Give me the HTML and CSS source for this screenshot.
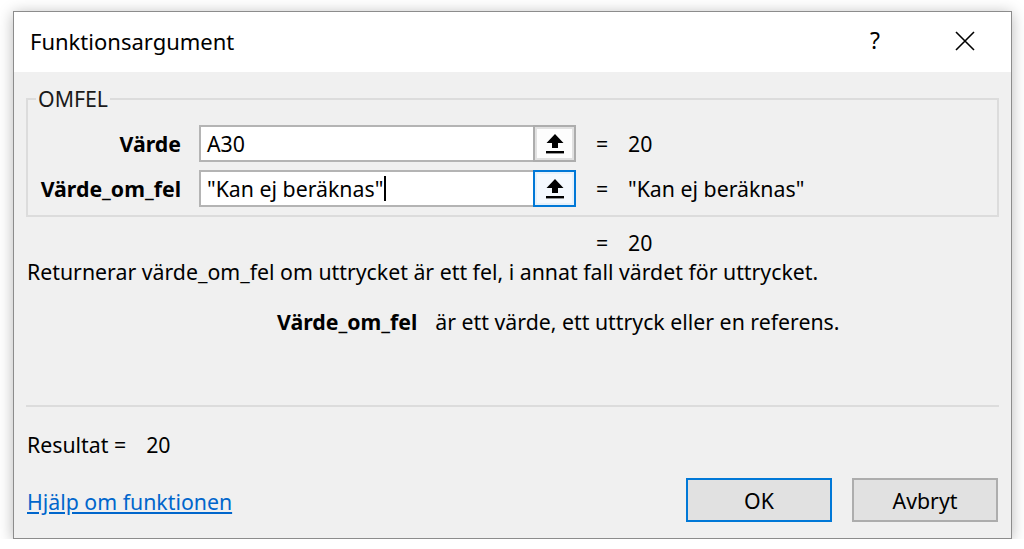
FILE: index.html
```html
<!DOCTYPE html>
<html lang="sv">
<head>
<meta charset="utf-8">
<title>Funktionsargument</title>
<link rel="stylesheet" href="styles.css">
</head>
<body>
<div class="dialog">
  <div class="titlebar">
    <span class="title">Funktionsargument</span>
    <span class="help">?</span>
    <span class="close">
      <svg width="20" height="20" viewBox="0 0 20 20"><path d="M1 1 L19 19 M19 1 L1 19" stroke="#000" stroke-width="1.6" fill="none"/></svg>
    </span>
  </div>
  <div class="content">
    <fieldset class="group">
      <legend>OMFEL</legend>
      <div class="row">
        <span class="arg">Värde</span>
        <div class="input">
          <span class="val">A30</span>
          <span class="ref-btn">
            <svg class="up" width="18" height="20" viewBox="0 0 18 20"><path d="M9 0 L17.5 9 L12 9 L12 14 L6 14 L6 9 L0.5 9 Z" fill="#000"/><rect x="0" y="17" width="18" height="2.4" fill="#000"/></svg>
          </span>
        </div>
        <span class="eq">=</span>
        <span class="res">20</span>
      </div>
      <div class="row">
        <span class="arg">Värde_om_fel</span>
        <div class="input">
          <span class="val">"Kan ej beräknas"<span class="caret"></span></span>
          <span class="ref-btn focus">
            <svg class="up" width="18" height="20" viewBox="0 0 18 20"><path d="M9 0 L17.5 9 L12 9 L12 14 L6 14 L6 9 L0.5 9 Z" fill="#000"/><rect x="0" y="17" width="18" height="2.4" fill="#000"/></svg>
          </span>
        </div>
        <span class="eq">=</span>
        <span class="res">"Kan ej beräknas"</span>
      </div>
    </fieldset>
    <div class="total"><span class="eq">=</span><span class="res">20</span></div>
    <p class="desc">Returnerar värde_om_fel om uttrycket är ett fel, i annat fall värdet för uttrycket.</p>
    <p class="argdesc"><b>Värde_om_fel</b><span>är ett värde, ett uttryck eller en referens.</span></p>
    <div class="sep"></div>
    <div class="result"><span>Resultat =</span><span>20</span></div>
    <div class="footer">
      <a href="#" class="helplink">Hjälp om funktionen</a>
      <div class="buttons">
        <button class="btn default">OK</button>
        <button class="btn">Avbryt</button>
      </div>
    </div>
  </div>
</div>
</body>
</html>
```
FILE: styles.css
```css
html, body {
  margin: 0;
  padding: 0;
  background: #ffffff;
}
body {
  font-family: "Noto Sans", "Open Sans", sans-serif;
  font-size: 21.3px;
  color: #000;
  padding: 11px 0 0 13px;
}
.dialog {
  width: 997px;
  height: 526px;
  border: 1px solid #8c8c8c;
  background: #f0f0f0;
  box-shadow: 0 2px 14px rgba(0, 0, 0, 0.28);
  display: flex;
  flex-direction: column;
}
.titlebar {
  height: 60px;
  background: #fff;
  display: flex;
  align-items: center;
  padding-left: 16px;
}
.title {
  font-size: 22px;
  flex: 1;
  padding-bottom: 2px;
}
.help {
  font-size: 23px;
  width: 12px;
  margin-right: 73px;
  padding-bottom: 4px;
}
.close {
  width: 20px;
  height: 20px;
  margin-right: 36px;
  margin-bottom: 3px;
  display: flex;
}
.content {
  padding: 0 12px;
  display: flex;
  flex-direction: column;
}
.group {
  margin: 12px 0 0 0;
  padding: 12px 0 8px 0;
  border: 2px solid #dcdcdc;
  min-width: 0;
}
.group legend {
  padding: 0 2px;
  margin-left: 8px;
  color: #1a1a1a;
  font-size: 21.3px;
  line-height: 29px;
}
.row {
  display: flex;
  align-items: center;
  height: 37px;
}
.row + .row {
  margin-top: 8px;
}
.arg {
  width: 153px;
  text-align: right;
  font-weight: bold;
  margin-right: 18px;
}
.input {
  width: 377px;
  height: 37px;
  box-sizing: border-box;
  border: 2px solid #b4b4b4;
  background: #fff;
  display: flex;
  align-items: center;
}
.val {
  flex: 1;
  padding-left: 6px;
  display: flex;
  align-items: center;
  white-space: nowrap;
}
.caret {
  display: inline-block;
  width: 2px;
  height: 25px;
  background: #000;
  margin-left: 1px;
}
.ref-btn {
  width: 43px;
  height: 37px;
  box-sizing: border-box;
  margin: -2px -2px -2px 0;
  border: 2px solid #adadad;
  background: #fdfdfd;
  box-shadow: inset 0 0 0 2px #e1e1e1;
  display: flex;
  align-items: center;
  justify-content: center;
}
.ref-btn.focus {
  border-color: #0078d7;
  background: #f4f9fe;
  box-shadow: inset 0 0 0 2px #e5f1fb;
}
.up {
  display: block;
}
.eq {
  width: 32px;
  margin-left: 20px;
}
.res {
  white-space: nowrap;
}
.total {
  display: flex;
  margin: 10px 0 0 550px;
  height: 30px;
  align-items: center;
}
.desc {
  margin: 0;
  padding-left: 1px;
  height: 30px;
  line-height: 30px;
  white-space: nowrap;
}
.argdesc {
  margin: 20px 0 0 0;
  padding-left: 251px;
  height: 30px;
  line-height: 30px;
  display: flex;
  white-space: nowrap;
}
.argdesc b {
  margin-right: 18px;
}
.sep {
  margin-top: 68px;
  height: 2px;
  background: #dcdcdc;
}
.result {
  margin-top: 23px;
  padding-left: 1px;
  height: 30px;
  line-height: 30px;
  display: flex;
  gap: 20px;
}
.footer {
  margin-top: 18px;
  display: flex;
  align-items: center;
  justify-content: space-between;
}
.helplink {
  color: #0066cc;
  text-decoration: underline;
  padding-left: 1px;
  margin-top: 3px;
}
.buttons {
  display: flex;
  gap: 20px;
  margin-right: 1px;
}
.btn {
  font-family: inherit;
  font-size: 21.3px;
  width: 146px;
  height: 44px;
  background: #e1e1e1;
  border: 2px solid #adadad;
  color: #000;
  padding: 0;
}
.btn.default {
  border-color: #0078d7;
}
```
